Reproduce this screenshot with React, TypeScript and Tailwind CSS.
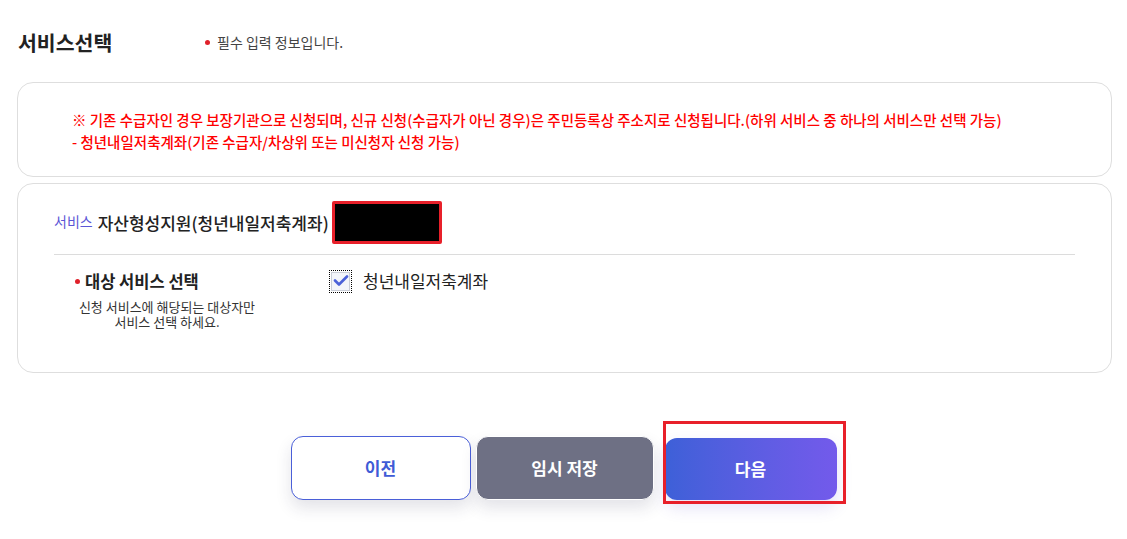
import React from 'react'

const font = { fontFamily: '"Noto Sans CJK KR", "Noto Sans", sans-serif' }

const CheckBox = (): React.ReactElement => (
  <span className="relative inline-flex h-[21px] w-[21px] items-center justify-center outline-1 outline-dotted outline-black">
    <span className="flex h-[19px] w-[19px] items-center justify-center border border-[#c9cdd6] bg-[#f3f5fa]">
      <svg width="16" height="12" viewBox="0 0 16 12" fill="none">
        <path d="M2 5.5 L6 9.5 L14 1.5" stroke="#4b61d8" strokeWidth="2.6" strokeLinecap="round" strokeLinejoin="round" />
      </svg>
    </span>
  </span>
)

export default function App(): React.ReactElement {
  return (
    <div className="min-h-[539px] w-[1127px] bg-white text-[#222]" style={font}>
      <div className="flex items-center pl-[18px] pt-[29px]">
        <h1 className="w-[187px] text-[20.5px] font-semibold leading-[26px] text-[#222]">서비스선택</h1>
        <p className="flex items-center text-[14px] text-[#444]">
          <span className="mr-[7px] inline-block h-[5px] w-[5px] rounded-full bg-[#e0202a]" />
          필수 입력 정보입니다.
        </p>
      </div>

      <div className="ml-[17px] mt-[27px] w-[1095px] rounded-[16px] border border-[#dedede] pb-[23px] pl-[54px] pt-[26px] text-[14.5px] font-medium leading-[22px] text-[#ff0000]">
        <p>※ 기존 수급자인 경우 보장기관으로 신청되며, 신규 신청(수급자가 아닌 경우)은 주민등록상 주소지로 신청됩니다.(하위 서비스 중 하나의 서비스만 선택 가능)</p>
        <p>- 청년내일저축계좌(기존 수급자/차상위 또는 미신청자 신청 가능)</p>
      </div>

      <div className="ml-[17px] mt-[6px] w-[1095px] rounded-[16px] border border-[#dedede] px-[36px] pb-[43px] pt-[17px]">
        <div className="flex h-[43px] items-center">
          <span className="mr-[5px] mt-[-3px] text-[14px] text-[#5b56d6]">서비스</span>
          <span className="text-[17px] font-medium text-[#222]">자산형성지원(청년내일저축계좌)</span>
          <span className="ml-[3px] h-[43px] w-[110px] rounded-[2px] border-[3px] border-[#e8202a] bg-black" />
        </div>
        <div className="mt-[10px] h-px w-full bg-[#dcdcdc]" />

        <div className="mt-[14px] flex">
          <div className="w-[226px]">
            <p className="flex items-center pl-[21px] text-[16.5px] font-bold leading-[24px] text-[#222]">
              <span className="mr-[5px] inline-block h-[5px] w-[5px] rounded-full bg-[#e0202a]" />
              대상 서비스 선택
            </p>
            <p className="mt-[6px] text-center text-[13px] leading-[15px] text-[#333]">
              신청 서비스에 해당되는 대상자만
              <br />
              서비스 선택 하세요.
            </p>
          </div>
          <label className="ml-[50px] flex h-[24px] items-center gap-[12px] text-[17px] text-[#222]">
            <CheckBox />
            청년내일저축계좌
          </label>
        </div>
      </div>

      <div className="mt-[63px] flex items-start justify-center pb-[38px]">
        <button className="h-[64px] w-[180px] rounded-[12px] border border-[#4a5fd8] bg-white text-[17px] font-bold text-[#3f5bd6] shadow-[0_8px_16px_rgba(40,40,80,0.13)]">
          이전
        </button>
        <button className="ml-[5px] h-[64px] w-[178px] rounded-[12px] border border-white bg-[#6e7084] text-[17px] font-bold text-white shadow-[0_8px_16px_rgba(40,40,80,0.13)]">
          임시 저장
        </button>
        <div className="relative ml-[11px] mt-[2px]">
          <button className="h-[62px] w-[172px] rounded-[12px] bg-gradient-to-r from-[#3d60d8] to-[#735aeb] text-[17px] font-bold text-white shadow-[0_8px_16px_rgba(80,70,200,0.15)]">
            다음
          </button>
          <span className="pointer-events-none absolute left-[-2px] top-[-17px] h-[83px] w-[183px] border-[3px] border-[#e8202a]" />
        </div>
      </div>
    </div>
  )
}
